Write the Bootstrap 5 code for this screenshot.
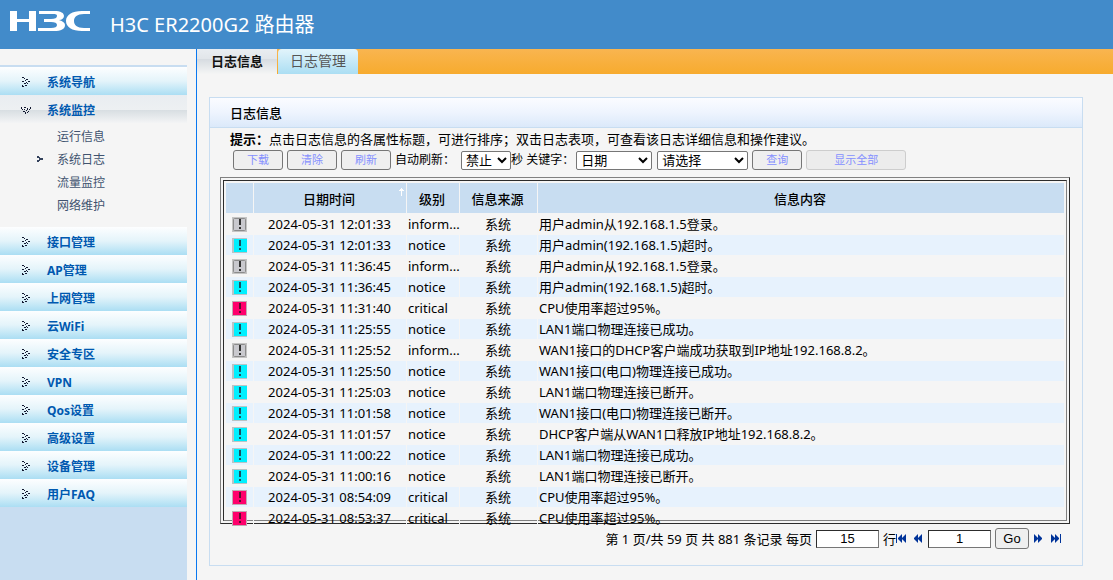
<!DOCTYPE html>
<html lang="zh-CN">
<head>
<meta charset="utf-8">
<meta name="viewport" content="width=device-width, initial-scale=1">
<title>H3C ER2200G2 路由器</title>
<link href="https://cdn.jsdelivr.net/npm/bootstrap@5.3.0/dist/css/bootstrap.min.css" rel="stylesheet">
<style>
:root { --line: #c8ddf1; --page: #f5f5f5; }
body { background: var(--page); color: #000; font: 13px/20px "Noto Sans", "Noto Sans CJK SC", sans-serif; }
a { text-decoration: none; }
.topbar { background: #428bca; height: 49px; }
.topbar h1 { font-size: 20px; line-height: 24px; font-weight: 400; padding: 13px 0 0 19px; }
.brand { margin: 11px 0 0 10px; }
.side { width: 187px; background: var(--line); }
.side-nav { background: var(--page); font-size: 12px; }
.side-top { height: 18px; border-bottom: 2px solid var(--line); }
.menu-row { height: 28px; padding: 3px 0 0 21px; gap: 15px; color: #0059b0; font-weight: 700; background: linear-gradient(#fdfeff, #e4f4fa 50%, #abdef3); }
.menu-row.active { background: linear-gradient(#e9edf1, #edf0f2 52%, #d8dee2 54%, #f3f4f5); }
.menu-row svg { width: 11px; height: 11px; flex: none; }
.sub-list { padding: 2px 0 10px; }
.sub-row { height: 23px; padding-left: 36px; gap: 14px; color: #41536f; }
.sub-row svg { width: 7px; height: 7px; flex: none; }
.main-area { border-left: 1px solid #0a78f0; margin-left: 9px; min-width: 0; min-height: calc(100vh - 49px); }
.tabs-bar { height: 25px; background: linear-gradient(#f9b550, #f7ab2e); font-size: 14px; gap: 1px; }
.tabs-bar a { width: 80px; padding-bottom: 1px; color: #555; background: linear-gradient(#e2f4fb, #abdef3); border-radius: 4px 4px 0 0; }
.tabs-bar a.active { color: #111; font-size: 13px; font-weight: 700; border-radius: 0; background: linear-gradient(#e9edf1, #e2e6ea 38%, #d7dce1 42%, #f4f5f5); }
.panel-box { border: 1px solid var(--line); margin: 23px 30px 14px 12px; }
.panel-box h2 { margin: 0; height: 30px; padding-left: 20px; font-size: 13px; line-height: 30px; font-weight: 500; border-bottom: 1px solid var(--line); background: linear-gradient(#fbfcff, #eef4fe 50%, #dbe9fa); }
.tip { padding: 1px 0 1px 20px; }
.tip b { font-weight: 700; }
.tools { height: 20px; padding-left: 23px; font-size: 12px; }
.tools button { width: 50px; height: 20px; margin-right: 4px; padding: 0; border: 1px solid #767676; border-radius: 3px; background: #efefef; color: #8590ff; font-size: 11px; line-height: 16px; }
.tools button.show-all { width: 100px; border-color: #cdcdcd; background: #ececec; }
.tools select { height: 19px; padding: 0; border: 1px solid #767676; border-radius: 2px; background: #fff; color: #000; font: 13px/16px "Liberation Sans", "Noto Sans CJK SC", sans-serif; }
#auto { width: 50px; margin-left: 6px; }
#key { width: 76px; margin: 0 5px 0 2px; }
#val { width: 91px; margin-right: 4px; }
.log-frame { height: 347px; margin: 7px 12px 0 10px; border: 1px solid; border-color: #808080 #2c2c2c #2c2c2c #808080; padding: 2px; }
.log-inner { height: 341px; border: 1px solid; border-color: #2c2c2c #808080 #808080 #2c2c2c; padding: 0 2px; }
.log-table { width: 100%; table-layout: fixed; border-collapse: separate; border-spacing: 0; margin-top: 2px; }
.col-mark { width: 28px; } .col-time { width: 153px; } .col-level { width: 53px; } .col-source { width: 78px; }
.log-table th { height: 30px; padding: 2px 2px 0 0; font-weight: 500; text-align: center; background: var(--line); border-right: 1px solid var(--page); }
.log-table td { height: 21px; line-height: 20px; padding: 0 0 0 1px; white-space: nowrap; border-right: 1px solid var(--page); border-bottom: 1px solid var(--page); }
.log-table tbody tr:first-child td { height: 22px; padding-top: 1px; }
.log-table td.text-center { padding: 0 1px 0 0; }
.log-table tr :last-child { border-right: 0; }
.log-table tbody tr:nth-child(even) td { background: #e7f2fd; }
.log-table td svg { width: 15px; height: 15px; display: block; margin-left: 5px; }
.sort-mark { top: 5px; right: 1px; width: 7px; height: 8px; }
.pager { height: 41px; padding: 2px 20px 14px 0; }
.pager input { width: 63px; height: 18px; padding: 0; border: 1px solid; border-color: #2c2c2c #767676 #767676 #2c2c2c; background: #fff; color: #000; text-align: center; font: 13px/16px "Liberation Sans", sans-serif; }
.pager #size { margin: 0 4px; }
.pager button { width: 34px; height: 21px; margin: 0 5px 0 4px; padding: 0; border: 1px solid #767676; border-radius: 3px; background: #efefef; color: #000; font: 13px/18px "Liberation Sans", sans-serif; }
.pager svg { height: 9px; display: block; fill: #003399; }
.pager .prev-link { margin: 0 5px 0 7px; }
</style>
</head>
<body>
<svg class="d-none" aria-hidden="true">
  <symbol id="dots-right" viewBox="0 0 11 11"><path fill="#111830" d="M1 0h2v1h-2zM3 1h1v1h-1zM1 4h2v1h-2zM4 3h1v1h-1zM5 2h2v1h-2zM5 5h1v1h-1zM7 4h2v1h-2zM3 6h2v1h-2zM1 8h1v1h-1zM6 6h1v1h-1zM4 8h2v1h-2zM1 9h2v1h-2z"/></symbol>
  <symbol id="dots-down" viewBox="0 0 11 11"><path fill="#111830" d="M0 2h1v2h-1zM1 4h1v1h-1zM3 2h2v1h-2zM3 4h1v1h-1zM6 3h1v2h-1zM9 2h1v2h-1zM2 6h2v1h-2zM5 5h1v1h-1zM8 4h1v1h-1zM4 7h1v2h-1zM6 7h1v1h-1zM7 6h1v1h-1z"/></symbol>
  <symbol id="pointer" viewBox="0 0 7 7"><path fill="#34425c" d="M1 0h2v1h1v1h-3zM3 2h4v2h-4zM1 4h3v1h-1v1h-2z"/></symbol>
  <symbol id="mark-info" viewBox="0 0 15 15"><path fill="#c4c4c4" d="M0 0h15v15H0z"/><rect x="1.500" y="1.500" width="12" height="12" rx="1" fill="#c9c9ce" stroke="#8c8c8c"/><path fill="#333" d="M7 2h2v6H7zM7 10h2v2H7z"/></symbol>
  <symbol id="mark-notice" viewBox="0 0 15 15"><path fill="#b9c4c6" d="M0 0h15v15H0z"/><path fill="#00f0ff" d="M2 1h13v13H2z"/><path fill="#1c5262" d="M7 2h2v6H7zM7 10h2v2H7z"/></symbol>
  <symbol id="mark-critical" viewBox="0 0 15 15"><path fill="#c2aab3" d="M0 0h15v15H0z"/><path fill="#ff006c" d="M1 1h13v13H1z"/><path fill="#5c1030" d="M7 2h2v6H7zM7 10h2v2H7z"/></symbol>
</svg>
<header class="topbar d-flex">
  <svg class="brand flex-shrink-0" width="81" height="20" viewBox="0 0 81 20" role="img" aria-label="H3C"><path fill="#fff" d="M0 0h7v8h12V0h7v20h-7v-9H7v9H0zM29 0h15c7 0 10 2 10 5 0 2-2 4-5 4 4 1 6 3 6 5 0 4-4 6-11 6H28v-3h13c4 0 6-1 6-3s-2-3-6-3H34V8h7c4 0 6-1 6-3s-2-2-6-2H29zM80 0v3h-6c-7 0-10 3-10 7s3 7 10 7h6v3h-8c-10 0-16-4-16-10S62 0 72 0z"/></svg>
  <h1 class="m-0 text-white">H3C ER2200G2 路由器</h1>
</header>
<div class="d-flex">
  <aside class="side flex-shrink-0">
    <nav class="side-nav" id="sideNav"><div class="side-top"></div></nav>
  </aside>
  <main class="main-area flex-grow-1">
    <nav class="tabs-bar d-flex">
      <a href="#" class="active d-flex align-items-center justify-content-center">日志信息</a>
      <a href="#" class="d-flex align-items-center justify-content-center">日志管理</a>
    </nav>
    <section class="panel-box">
      <h2>日志信息</h2>
      <div class="tip"><b>提示：</b>点击日志信息的各属性标题，可进行排序；双击日志表项，可查看该日志详细信息和操作建议。</div>
      <form class="tools d-flex align-items-center">
        <button type="button">下载</button><button type="button">清除</button><button type="button">刷新</button>
        <label for="auto">自动刷新：</label>
        <select id="auto"><option>禁止</option></select><span>秒&nbsp;</span>
        <label for="key">关键字：</label>
        <select id="key"><option>日期</option></select>
        <select id="val" aria-label="请选择"><option>请选择</option></select>
        <button type="button">查询</button><button type="button" class="show-all">显示全部</button>
      </form>
      <div class="log-frame"><div class="log-inner">
        <table class="log-table">
          <colgroup><col class="col-mark"><col class="col-time"><col class="col-level"><col class="col-source"><col></colgroup>
          <thead><tr><th></th><th class="position-relative">日期时间<svg class="sort-mark position-absolute" viewBox="0 0 7 8"><path fill="#fff" d="M3 0h1v1h1v1h1v1H4v5H3V3H1V2h1V1h1z"/></svg></th><th>级别</th><th>信息来源</th><th>信息内容</th></tr></thead>
          <tbody id="rows"></tbody>
        </table>
      </div></div>
      <form class="pager d-flex align-items-center justify-content-end">
        <label for="size">第 1 页/共 59 页 共 881 条记录 每页</label>
        <input id="size" type="text" value="15"><span>行</span>
        <a href="#" aria-label="首页"><svg width="11" viewBox="0 0 11 9"><path d="M0 0h1v9H0zM6 0v9L2 5V4zM10 0v9L6 5V4z"/></svg></a>
        <a href="#" class="prev-link" aria-label="上一页"><svg width="9" viewBox="0 0 9 9"><path d="M4 0v9L0 5V4zM8 0v9L4 5V4z"/></svg></a>
        <input type="text" value="1" aria-label="页码">
        <button type="button">Go</button>
        <a href="#" aria-label="下一页"><svg width="9" viewBox="0 0 9 9"><path d="M0 0v9l4-4V4zM4 0v9l4-4V4z"/></svg></a>
        <a href="#" class="ms-2" aria-label="末页"><svg width="11" viewBox="0 0 11 9"><path d="M0 0v9l4-4V4zM4 0v9l4-4V4zM9 0h1v9H9z"/></svg></a>
      </form>
    </section>
  </main>
</div>
<script src="https://cdn.jsdelivr.net/npm/bootstrap@5.3.0/dist/js/bootstrap.bundle.min.js"></script>
<script>
const nav = document.getElementById('sideNav');
const item = (t, on) => `<a href="#" class="menu-row d-flex align-items-center ${on ? 'active' : ''}"><svg><use href="#dots-${on ? 'down' : 'right'}"/></svg>${t}</a>`;
const sub = ['运行信息', '系统日志', '流量监控', '网络维护'].map((t, i) =>
  `<a href="#" class="sub-row d-flex align-items-center"><svg>${i === 1 ? '<use href="#pointer"/>' : ''}</svg>${t}</a>`).join('');
nav.innerHTML += item('系统导航') + item('系统监控', true) + `<div class="sub-list">${sub}</div>` +
  ['接口管理', 'AP管理', '上网管理', '云WiFi', '安全专区', 'VPN', 'Qos设置', '高级设置', '设备管理', '用户FAQ'].map(t => item(t)).join('');

const login = '用户admin从192.168.1.5登录。', timeout = '用户admin(192.168.1.5)超时。', cpu = 'CPU使用率超过95%。';
const data = [
  ['12:01:33', 'info', login], ['12:01:33', 'notice', timeout],
  ['11:36:45', 'info', login], ['11:36:45', 'notice', timeout],
  ['11:31:40', 'critical', cpu], ['11:25:55', 'notice', 'LAN1端口物理连接已成功。'],
  ['11:25:52', 'info', 'WAN1接口的DHCP客户端成功获取到IP地址192.168.8.2。'],
  ['11:25:50', 'notice', 'WAN1接口(电口)物理连接已成功。'], ['11:25:03', 'notice', 'LAN1端口物理连接已断开。'],
  ['11:01:58', 'notice', 'WAN1接口(电口)物理连接已断开。'], ['11:01:57', 'notice', 'DHCP客户端从WAN1口释放IP地址192.168.8.2。'],
  ['11:00:22', 'notice', 'LAN1端口物理连接已成功。'], ['11:00:16', 'notice', 'LAN1端口物理连接已断开。'],
  ['08:54:09', 'critical', cpu], ['08:53:37', 'critical', cpu]];
document.getElementById('rows').innerHTML = data.map(([t, l, m]) =>
  `<tr><td><svg><use href="#mark-${l}"/></svg></td><td class="text-center">2024-05-31 ${t}</td><td>${l === 'info' ? 'inform...' : l}</td><td class="text-center">系统</td><td>${m}</td></tr>`).join('');
</script>
</body>
</html>
